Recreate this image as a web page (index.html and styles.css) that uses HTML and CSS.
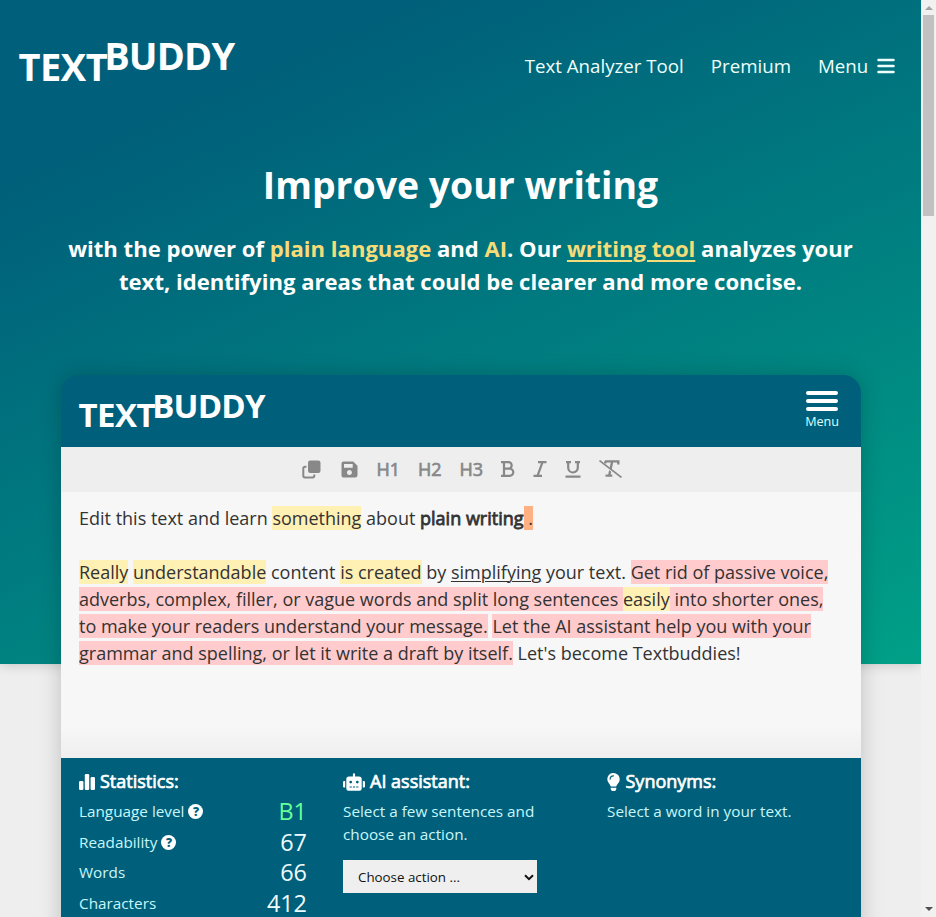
FILE: index.html
```html
<!DOCTYPE html>
<html lang="en">
<head>
<meta charset="utf-8">
<title>TextBuddy</title>
<link rel="stylesheet" href="styles.css">
</head>
<body>
<div class="page">
  <div class="hero">
    <header class="topbar">
      <div class="logo"><span class="logo-text">TEXT</span><span class="logo-buddy">BUDDY</span></div>
      <nav class="nav">
        <a>Text Analyzer Tool</a><a>Premium</a>
        <a class="nav-menu">Menu <svg width="18" height="16" viewBox="0 0 18 16"><path d="M1.5 2h15M1.5 8h15M1.5 14h15" stroke="currentColor" stroke-width="2.5" stroke-linecap="round"/></svg></a>
      </nav>
    </header>
    <h1>Improve your writing</h1>
    <p class="lead">with the power of <em>plain language</em> and <em>AI</em>. Our <em class="link">writing tool</em> analyzes your<br>text, identifying areas that could be clearer and more concise.</p>
  </div>
  <main class="app">
    <div class="app-head">
      <div class="logo logo-small"><span class="logo-text">TEXT</span><span class="logo-buddy">BUDDY</span></div>
      <div class="app-menu">
        <svg width="32" height="20" viewBox="0 0 32 20"><path d="M2 2h28M2 10h28M2 18h28" stroke="#fff" stroke-width="4" stroke-linecap="round"/></svg>
        <span>Menu</span>
      </div>
    </div>
    <div class="tools">
      <svg class="t-copy" width="19" height="19" viewBox="0 0 19 19"><rect x="6" y="0.5" width="12.5" height="12.5" rx="2.2" fill="#888"/><path d="M4.5 6.7H3a1.7 1.7 0 0 0-1.7 1.7v7.4A1.7 1.7 0 0 0 3 17.5h7.6a1.7 1.7 0 0 0 1.7-1.7v-1.3" fill="none" stroke="#888" stroke-width="2"/></svg>
      <svg class="t-save" width="17" height="17" viewBox="0 0 17 17"><path fill="#888" fill-rule="evenodd" d="M2.4.5h9.8l4.3 4.2v9.5a2.3 2.3 0 0 1-2.3 2.3H2.4A2.1 2.1 0 0 1 .5 14.2V2.6A2.1 2.1 0 0 1 2.4.5zM3 3v3.8h8.7V3zM8.5 9a2.5 2.5 0 1 0 0 5 2.5 2.5 0 0 0 0-5z"/></svg>
      <span class="t-h">H1</span><span class="t-h">H2</span><span class="t-h">H3</span>
      <svg class="t-b" width="14" height="16" viewBox="0 0 14 16"><path d="M0 1.2h7.5a3.2 3.2 0 0 1 0 6.4H3M7.5 7.6h1.2a3.5 3.5 0 0 1 0 7.2H0M3 1.2v13.6" fill="none" stroke="#888" stroke-width="2.2"/></svg>
      <svg class="t-i" width="14" height="16" viewBox="0 0 14 16"><path d="M5 1.2h8.500M0.500 14.800H9M9.500 1.200l-5 13.600" fill="none" stroke="#888" stroke-width="2.2"/></svg>
      <svg class="t-u" width="16" height="17" viewBox="0 0 16 17"><path d="M1 1.2h5M10 1.2h5M3.200 1v5.700a4.800 4.800 0 0 0 9.600 0V1M0.500 15.700h15" fill="none" stroke="#888" stroke-width="2.2"/></svg>
      <svg class="t-x" width="23" height="18" viewBox="0 0 23 18"><path d="M6 1.4h13.3v3M13.2 1.4 10.2 15.5M6.5 15.6h6.8M6.600 1.400l-.5 2" fill="none" stroke="#888" stroke-width="2.4"/><path d="M.8 1.900l21 16.400" stroke="#eee" stroke-width="1.4"/><path d="M.5.6l22 16.800" stroke="#888" stroke-width="1.7"/></svg>
    </div>
    <div class="editor">
      <p>Edit this text and learn <mark>something</mark> about <b>plain writing</b><mark class="space"> .</mark></p>
      <p><mark>Really</mark> <mark>understandable</mark> content <mark>is created</mark> by <u>simplifying</u> your text. <mark class="long">Get rid of passive voice,<br>adverbs, complex, filler, or vague words and split long sentences <mark>easily</mark> into shorter ones,<br>to make your readers understand your message.</mark> <mark class="long">Let the AI assistant help you with your<br>grammar and spelling, or let it write a draft by itself.</mark> Let's become Textbuddies!</p>
    </div>
    <div class="panels">
      <section class="stats">
        <h2><svg width="16" height="16" viewBox="0 0 16 16"><rect y="7" width="4.4" height="9" rx="1.2" fill="#fff"/><rect x="5.8" width="4.4" height="16" rx="1.2" fill="#fff"/><rect x="11.6" y="3" width="4.4" height="13" rx="1.2" fill="#fff"/></svg>Statistics:</h2>
        <dl>
          <div><dt>Language level <i class="help">?</i></dt><dd class="level">B1</dd></div>
          <div><dt>Readability <i class="help">?</i></dt><dd>67</dd></div>
          <div><dt>Words</dt><dd>66</dd></div>
          <div><dt>Characters</dt><dd>412</dd></div>
        </dl>
      </section>
      <section>
        <h2><svg class="bot" width="22" height="18" viewBox="0 0 640 512"><path fill="#fff" fill-rule="evenodd" d="M32 224h32v192H32a32 32 0 0 1-32-32V256a32 32 0 0 1 32-32zm512-48v272a64 64 0 0 1-64 64H160a64 64 0 0 1-64-64V176a80 80 0 0 1 80-80h112V32a32 32 0 0 1 64 0v64h112a80 80 0 0 1 80 80zM264 256a40 40 0 1 0-80 0 40 40 0 0 0 80 0zm-8 128h-64v32h64zm96 0h-64v32h64zm104-128a40 40 0 1 0-80 0 40 40 0 0 0 80 0zm-8 128h-64v32h64zm192-128v128a32 32 0 0 1-32 32h-32V224h32a32 32 0 0 1 32 32z"/></svg>AI assistant:</h2>
        <p>Select a few sentences and<br>choose an action.</p>
        <div class="select">Choose action ...<svg width="10" height="7" viewBox="0 0 10 7"><path d="M1 1.2l4 4 4-4" fill="none" stroke="#111" stroke-width="2"/></svg></div>
      </section>
      <section>
        <h2><svg class="bulb" width="13" height="18" viewBox="0 0 352 512"><path fill="#fff" fill-rule="evenodd" d="M96 454v-38h160v38l-20 44-22 14h-76l-22-14zM0 176a176 176 0 1 1 308 116c-18 20-45 62-55 92H99c-10-30-37-72-55-92A175 175 0 0 1 0 176zm176-80a16 16 0 0 0 0-32A112 112 0 0 0 64 176a16 16 0 0 0 32 0 80 80 0 0 1 80-80z"/></svg>Synonyms:</h2>
        <p>Select a word in your text.</p>
      </section>
    </div>
  </main>
</div>
<div class="scrollbar"><i class="arrow up"></i><div class="thumb"></div><i class="arrow down"></i></div>
</body>
</html>
```
FILE: styles.css
```css
* { box-sizing: border-box; }
body {
  margin: 0;
  display: flex;
  height: 917px;
  overflow: hidden;
  background: #eee;
  font-family: "Open Sans", sans-serif;
  color: #fff;
}
h1, h2, p, dl, dd { margin: 0; }
svg { flex: none; }
.page { width: 921px; flex: none; }
.hero {
  height: 664px;
  background: linear-gradient(156deg, #005f7a 17%, #00a087 100%);
  box-shadow: 0 0 12px rgba(0, 0, 0, .2);
}
.topbar {
  height: 132px;
  padding: 0 27px 0 18.5px;
  display: flex;
  justify-content: space-between;
  align-items: center;
}
.logo {
  display: flex;
  font-size: 38px;
  line-height: 52px;
  font-weight: 700;
}
.topbar .logo { margin-top: -6px; }
.logo-text { margin-top: 5px; letter-spacing: -.5px; }
.logo-buddy { margin: -6px 0 0 -3px; letter-spacing: -.8px; }
.nav {
  display: flex;
  gap: 27px;
  font-size: 18.7px;
  line-height: 26px;
  color: #effffc;
  margin-right: -.7px;
}
.nav-menu { display: flex; align-items: center; gap: 8.5px; }
h1 {
  margin-top: 27px;
  font-size: 37.4px;
  line-height: 52px;
  font-weight: 700;
  text-align: center;
}
.lead {
  margin-top: 21px;
  font-size: 22.08px;
  line-height: 33px;
  font-weight: 700;
  text-align: center;
}
.lead em { font-style: normal; color: #f6dc78; }
.lead .link { text-decoration: underline; text-underline-offset: 3px; text-decoration-thickness: 2px; }
.app {
  position: relative;
  width: 800px;
  height: 560px;
  margin: -289px 0 0 61px;
  border-radius: 18px 18px 0 0;
  box-shadow: 0 0 22px rgba(0, 0, 0, .2);
  background: #005f7a;
}
.app-head {
  height: 72px;
  padding: 0 22px 0 17.5px;
  display: flex;
  justify-content: space-between;
}
.logo-small { font-size: 33px; line-height: 45px; padding-top: 13px; }
.logo-small .logo-text { margin-top: 4px; }
.logo-small .logo-buddy { margin-top: -5px; }
.app-menu {
  display: flex;
  flex-direction: column;
  align-items: center;
  padding-top: 16px;
  font-size: 12.6px;
  line-height: 18px;
  color: #dff;
}
.app-menu span { margin-top: 2px; }
.tools {
  height: 45px;
  background: #eee;
  display: flex;
  align-items: center;
  padding: 0 0 1px 240.5px;
  color: #888;
}
.t-save { margin: 0 19px 0 20px; }
.t-h { font-size: 18px; width: 41.5px; line-height: 24px; -webkit-text-stroke: .7px #888; }
.t-i { margin-left: 18px; }
.t-u { margin-left: 18px; }
.t-x { margin-left: 18px; }
.editor {
  height: 266px;
  padding: 13px 18px;
  background: linear-gradient(#f7f7f7 88%, #eee);
  color: #333;
  font-size: 18px;
  line-height: 27px;
  white-space: nowrap;
}
.editor p + p { margin-top: 27px; }
.editor b { font-weight: 400; -webkit-text-stroke: .8px #333; }
u { text-underline-offset: 2px; text-decoration-thickness: 1px; }
mark { color: inherit; background: #fff0b3; }
.long { background: #ffcbcd; }
.space { background: #ffb184; white-space: pre; }
.panels {
  display: grid;
  grid-template-columns: 228px 228px 1fr;
  column-gap: 36px;
  padding: 10px 18px 0;
  font-size: 15.3px;
  line-height: 23px;
  color: #c8f7fa;
}
.panels h2 {
  display: flex;
  align-items: center;
  gap: 5px;
  font-size: 18px;
  line-height: 27px;
  font-weight: 400;
  color: #fff;
  -webkit-text-stroke: .7px #fff;
}
.panels p { margin-top: 5px; white-space: nowrap; }
.panels .bulb { margin-right: .5px; }
dl { margin-top: 1px; }
dl div { display: flex; justify-content: space-between; height: 30.7px; align-items: center; }
dt { display: flex; align-items: center; gap: 4px; }
dd { font-size: 23.4px; color: #effcff; }
.level { color: #66ff99; }
.help {
  width: 15px;
  height: 15px;
  border-radius: 50%;
  background: #fff;
  color: #005f7a;
  font-style: normal;
  font-weight: 800;
  font-size: 12px;
  line-height: 15px;
  text-align: center;
}
.select {
  width: 194px;
  margin-top: 14px;
  height: 33px;
  padding: 1px 3px 0 15px;
  background: #efefef;
  color: #111;
  font-size: 13.33px;
  display: flex;
  align-items: center;
  justify-content: space-between;
}
.scrollbar {
  width: 15px;
  height: 917px;
  background: #f1f1f1;
  display: flex;
  flex-direction: column;
  align-items: center;
}
.arrow { border: 4px solid transparent; }
.up { border-top: 0; border-bottom-color: #a3a3a3; margin: 6px 0 5px; }
.thumb { width: 11px; height: 201px; background: #c1c1c1; }
.down { border-bottom: 0; border-top-color: #505050; margin: auto 0 6px; }
```
